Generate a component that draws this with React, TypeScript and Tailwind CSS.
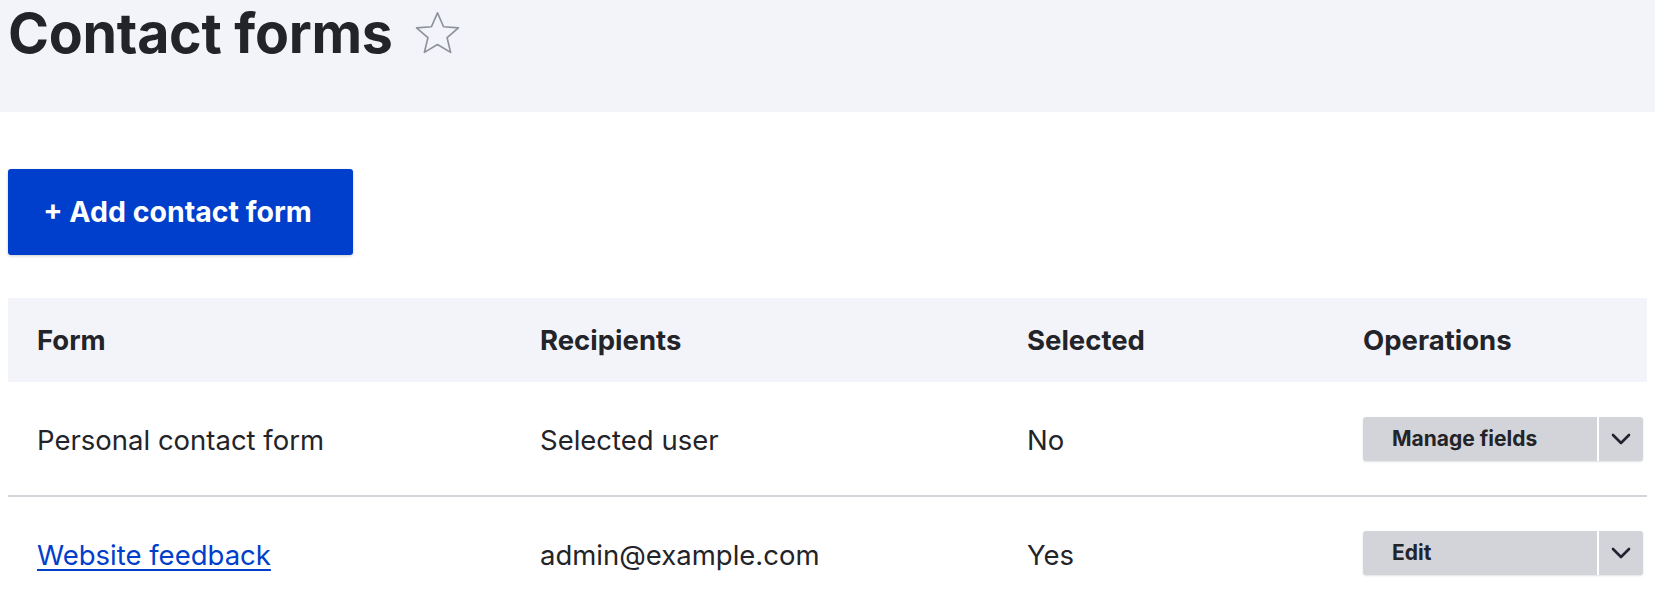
const rows = [
  { form: 'Personal contact form', link: false, recipients: 'Selected user', selected: 'No', op: 'Manage fields' },
  { form: 'Website feedback', link: true, recipients: 'admin@example.com', selected: 'Yes', op: 'Edit' },
];

function Dropbutton({ label }: { label: string }) {
  return (
    <div className="flex h-[44px] w-[280px] rounded-[3px] bg-[#d3d4d9] shadow-[0_1px_2px_rgba(0,0,0,0.12)]">
      <span className="flex flex-1 items-center pl-[29px] text-[21px] font-bold text-[#232429]">{label}</span>
      <span className="w-[2px] bg-white" />
      <span className="flex w-[44px] items-center justify-center">
        <svg width="20" height="12" viewBox="0 0 20 12" fill="none">
          <path d="M2 2l8 8 8-8" stroke="#222330" strokeWidth="2.6" strokeLinecap="round" strokeLinejoin="round" />
        </svg>
      </span>
    </div>
  );
}

export default function App() {
  return (
    <div className="min-h-[607px] bg-white font-['Inter','Liberation_Sans',sans-serif] text-[#232429]">
      <div className="h-[112px] bg-[#f3f4f9] px-2">
        <h1 className="flex items-start gap-[21px] text-[55.5px] font-bold leading-[66px] tracking-[-0.005em]">
          Contact forms
          <svg className="mt-[10px]" width="47" height="46" viewBox="0 0 24 23" fill="none">
            <path
              d="M12 1.2l3.1 7.1 7.6.6-5.8 5 1.8 7.5L12 17.4l-6.7 4 1.8-7.5-5.8-5 7.6-.6z"
              stroke="#8e929c"
              strokeWidth="0.85"
              strokeLinejoin="round"
            />
          </svg>
        </h1>
      </div>

      <div className="px-2">
        <button className="mt-[57px] flex h-[86px] w-[345px] items-center justify-center rounded-[3px] bg-[#003ecc] pr-[6px] text-[28.5px] font-bold text-white shadow-[0_1px_3px_rgba(0,0,0,0.2)]">
          + Add contact form
        </button>

        <table className="mt-[43px] w-full table-fixed border-collapse text-left">
          <thead>
            <tr className="h-[84px] bg-[#f3f4f9] text-[27.5px] font-bold">
              <th className="w-[503px] pl-[29px] pt-[2px]">Form</th>
              <th className="w-[487px] pl-[29px] pt-[2px]">Recipients</th>
              <th className="w-[336px] pl-[29px] pt-[2px]">Selected</th>
              <th className="pl-[29px] pt-[2px]">Operations</th>
            </tr>
          </thead>
          <tbody className="text-[27.5px]">
            {rows.map((r) => (
              <tr key={r.form} className="h-[114px] border-b-2 border-[#d3d4d9]">
                <td className="pl-[29px] pt-[5px]">
                  {r.link ? (
                    <a href="#" className="text-[#003ecc] underline decoration-2 underline-offset-[4px]">
                      {r.form}
                    </a>
                  ) : (
                    r.form
                  )}
                </td>
                <td className="pl-[29px] pt-[5px]">{r.recipients}</td>
                <td className="pl-[29px] pt-[5px]">{r.selected}</td>
                <td className="pl-[29px]">
                  <Dropbutton label={r.op} />
                </td>
              </tr>
            ))}
          </tbody>
        </table>
      </div>
    </div>
  );
}
